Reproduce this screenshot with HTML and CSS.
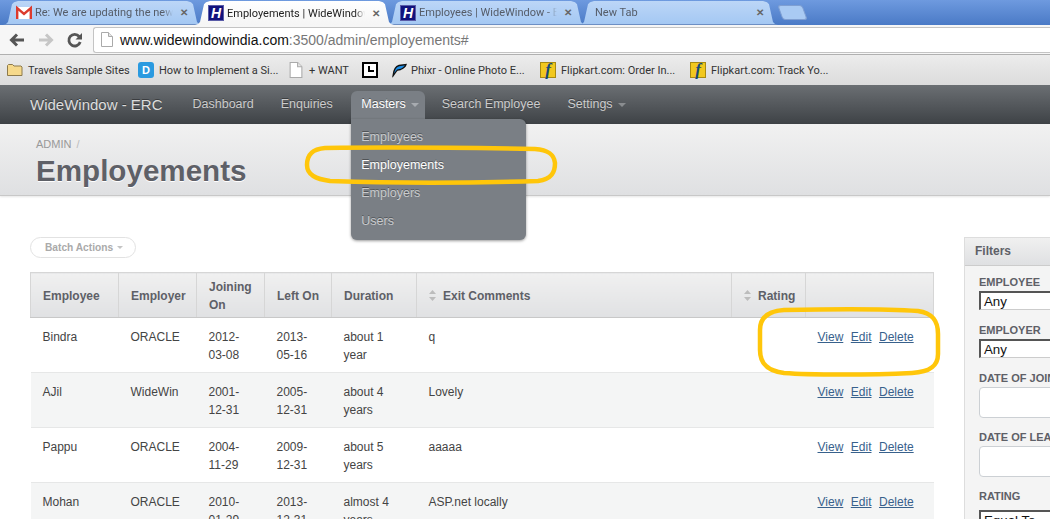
FILE: index.html
```html
<!DOCTYPE html>
<html lang="en">
<head>
  <meta charset="UTF-8" />
  <title>Employements | WideWindow - ERC</title>
  <link rel="stylesheet" href="styles.css">
</head>
<body>
  <div class="chrome">
    <div class="tabstrip">
      <div class="tab">
        <svg class="favicon" viewBox="0 0 16 16"><rect y="2" width="16" height="12" fill="#fff"/><path d="M1.200 14V3L8 8.800 14.800 3v11" fill="none" stroke="#dc3b2e" stroke-width="2.400"/></svg>
        <span class="tab-title">Re: We are updating the new</span>
        <span class="tab-close">✕</span>
      </div>
      <div class="tab tab-active">
        <span class="logo-h">H</span>
        <span class="tab-title">Employements | WideWindow</span>
        <span class="tab-close">✕</span>
      </div>
      <div class="tab">
        <span class="logo-h">H</span>
        <span class="tab-title">Employees | WideWindow - E</span>
        <span class="tab-close">✕</span>
      </div>
      <div class="tab tab-new">
        <span class="tab-title">New Tab</span>
        <span class="tab-close">✕</span>
      </div>
      <div class="newtab-btn"></div>
    </div>

    <div class="toolbar">
      <svg class="nav-icon" viewBox="0 0 18 18"><path d="M16 9H4M9 3.500 3.500 9 9 14.500" fill="none" stroke="#555" stroke-width="3"/></svg>
      <svg class="nav-icon" viewBox="0 0 18 18"><path d="M2 9h12M9 3.500 14.500 9 9 14.500" fill="none" stroke="#c6c6c6" stroke-width="3"/></svg>
      <svg class="nav-icon" viewBox="0 0 18 18"><path d="M14.200 11a5.800 5.800 0 1 1-1-5.500" fill="none" stroke="#555" stroke-width="2.800"/><path d="M16 2v6.500H9.500z" fill="#555"/></svg>
      <div class="omnibox">
        <svg class="page-icon" viewBox="0 0 12 15"><path d="M.5.500h7l4 4v10H.5z" fill="#fff" stroke="#aaa"/><path d="M7.500.500v4h4" fill="#e6e6e6" stroke="#aaa"/></svg>
        <span class="url-host">www.widewindowindia.com</span><span class="url-rest">:3500/admin/employements#</span>
      </div>
    </div>

    <div class="bookmarks">
      <div class="bookmark bm-travels">
        <svg class="bm-icon" viewBox="0 0 16 16"><path d="M.5 13.500V3.500l1-1h4l1.500 1.500h7l1 1v8.500z" fill="#f6d98b" stroke="#8d7a4c"/></svg>
        Travels Sample Sites
      </div>
      <div class="bookmark bm-how"><span class="bm-d">D</span>How to Implement a Si...</div>
      <div class="bookmark bm-want">
        <svg class="bm-icon" viewBox="0 0 12 15"><path d="M.5.500h7l4 4v10H.5z" fill="#fff" stroke="#aaa"/><path d="M7.500.500v4h4" fill="#e6e6e6" stroke="#aaa"/></svg>
        + WANT
      </div>
      <div class="bookmark bm-clock">
        <svg class="bm-icon" viewBox="0 0 16 16"><rect x="1" y="1" width="14" height="14" fill="#fff" stroke="#000" stroke-width="2"/><path d="M7 4v5h5" fill="none" stroke="#000" stroke-width="2"/></svg>
      </div>
      <div class="bookmark bm-phixr">
        <svg class="bm-icon" viewBox="0 0 16 16"><path d="M2 14C2.500 9 4 4.500 8 3.500L15 2.500C14 5.500 12 6.500 9.500 7.500L6.500 8C4.500 9.500 3.500 12.500 2 14z" fill="#1c8ee8" stroke="#111" stroke-width="1.300"/></svg>
        Phixr - Online Photo E...
      </div>
      <div class="bookmark bm-flip"><span class="bm-f">f</span>Flipkart.com: Order In...</div>
      <div class="bookmark bm-flip"><span class="bm-f">f</span>Flipkart.com: Track Yo...</div>
    </div>
  </div>

  <nav class="navbar">
    <span class="brand">WideWindow - ERC</span>
    <ul class="nav-list">
      <li class="nav-item">Dashboard</li>
      <li class="nav-item">Enquiries</li>
      <li class="nav-item nav-open">
        Masters<span class="caret"></span>
        <ul class="dropdown">
          <li>Employees</li>
          <li class="dropdown-current">Employements</li>
          <li>Employers</li>
          <li>Users</li>
        </ul>
      </li>
      <li class="nav-item">Search Employee</li>
      <li class="nav-item">Settings<span class="caret caret-dim"></span></li>
    </ul>
  </nav>

  <header class="title-bar">
    <div class="crumbs">ADMIN <span class="crumb-sep">/</span></div>
    <h2 class="page-title">Employements</h2>
  </header>

  <div class="content">
    <section class="main-col">
      <button class="batch-btn">Batch Actions<span class="caret caret-light"></span></button>
      <table class="grid">
        <thead>
          <tr>
            <th class="c-employee">Employee</th>
            <th class="c-employer">Employer</th>
            <th class="c-joining">Joining On</th>
            <th class="c-left">Left On</th>
            <th class="c-duration">Duration</th>
            <th class="c-comments"><svg class="sort" viewBox="0 0 7 11"><path d="M3.500 0 7 4H0zM3.500 11 0 7h7z"/></svg>Exit Comments</th>
            <th class="c-rating"><svg class="sort" viewBox="0 0 7 11"><path d="M3.500 0 7 4H0zM3.500 11 0 7h7z"/></svg>Rating</th>
            <th class="c-actions"></th>
          </tr>
        </thead>
        <tbody>
          <tr>
            <td>Bindra</td><td>ORACLE</td><td>2012-03-08</td><td>2013-05-16</td><td>about 1 year</td><td>q</td><td></td>
            <td><a class="row-link" href="#">View</a><a class="row-link" href="#">Edit</a><a class="row-link" href="#">Delete</a></td>
          </tr>
          <tr>
            <td>AJil</td><td>WideWin</td><td>2001-12-31</td><td>2005-12-31</td><td>about 4 years</td><td>Lovely</td><td></td>
            <td><a class="row-link" href="#">View</a><a class="row-link" href="#">Edit</a><a class="row-link" href="#">Delete</a></td>
          </tr>
          <tr>
            <td>Pappu</td><td>ORACLE</td><td>2004-11-29</td><td>2009-12-31</td><td>about 5 years</td><td>aaaaa</td><td></td>
            <td><a class="row-link" href="#">View</a><a class="row-link" href="#">Edit</a><a class="row-link" href="#">Delete</a></td>
          </tr>
          <tr>
            <td>Mohan</td><td>ORACLE</td><td>2010-01-29</td><td>2013-12-31</td><td>almost 4 years</td><td>ASP.net locally</td><td></td>
            <td><a class="row-link" href="#">View</a><a class="row-link" href="#">Edit</a><a class="row-link" href="#">Delete</a></td>
          </tr>
        </tbody>
      </table>
    </section>

    <aside class="filters">
      <h3 class="filters-head">Filters</h3>
      <div class="filters-body">
        <label class="f-label">Employee</label>
        <div class="f-select">Any</div>
        <label class="f-label">Employer</label>
        <div class="f-select">Any</div>
        <label class="f-label">Date of joining</label>
        <div class="f-input"></div>
        <label class="f-label">Date of leaving</label>
        <div class="f-input"></div>
        <label class="f-label">Rating</label>
        <div class="f-select f-select-rating">Equal To</div>
      </div>
    </aside>
  </div>

  <!-- yellow marks drawn over the screenshot -->
  <svg class="marks" viewBox="0 0 1050 519">
    <path d="M325 148C390 147 480 148 535 149 548 150 554 154 555 163 555 172 552 179 538 181 470 183 390 183 330 181 316 179 307 175 307 165 307 154 313 149 325 148z"/>
    <path d="M784 310C830 309 890 309 918 311 932 313 938 320 938 334V354C938 366 930 372 912 373 870 375 810 375 784 373 768 371 760 364 760 350V330C760 318 768 311 784 310z"/>
  </svg>
</body>
</html>
```
FILE: styles.css
```css
html, body {
  margin: 0;
  height: 519px;
  overflow: hidden;
}
body {
  position: relative;
  font-family: "Liberation Sans", Arial, sans-serif;
  font-size: 12px;
  color: #444;
  background: #fff;
}
ul { list-style: none; margin: 0; padding: 0; }

/* browser window */
.chrome { font-family: Roboto, "Liberation Sans", sans-serif; }
.tabstrip {
  height: 25px;
  display: flex;
  overflow: hidden;
  background: linear-gradient(#6e9adf, #4a7ac6);
  box-sizing: border-box;
  align-items: flex-end;
}
.tab {
  flex: none;
  height: 24px;
  width: 199px;
  margin-right: -7px;
  padding: 0 14px 0 13px;
  box-sizing: border-box;
  display: flex;
  align-items: center;
  gap: 3px;
  font-size: 11px;
  color: #555c68;
  background: linear-gradient(#bcd6f7, #a4c8f3);
  border-bottom: 1px solid #6d8fc4;
  clip-path: polygon(0 100%, 3px 96%, 5px 88%, 9px 14%, 11px 5%, 15px 0, calc(100% - 15px) 0, calc(100% - 11px) 5%, calc(100% - 9px) 14%, calc(100% - 5px) 88%, calc(100% - 3px) 96%, 100% 100%);
}
.tab:first-child { margin-left: 3px; }
.tab-active {
  z-index: 2;
  color: #222;
  background: linear-gradient(#fff, #f5f5f5);
  border-bottom: 0;
}
.tab-title {
  flex: 1;
  min-width: 0;
  overflow: hidden;
  white-space: nowrap;
  -webkit-mask-image: linear-gradient(to left, transparent, #000 10px);
}
.tab-new { padding-left: 16px; }
.tab-close { font-size: 10px; color: #666; font-weight: 700; margin-left: 4px; }
.favicon { width: 16px; height: 16px; flex: none; }
.logo-h {
  flex: none;
  width: 16px;
  height: 16px;
  background: #11127c;
  box-shadow: inset 0 0 0 1px #5a5ca8;
  color: #fff;
  font: italic 700 14px/16px "Liberation Sans", sans-serif;
  text-align: center;
}
.newtab-btn {
  flex: none;
  width: 25px;
  height: 15px;
  margin: 0 0 5px 9px;
  border-radius: 3px;
  background: #a9caf3;
  transform: skewX(20deg);
  border: 1px solid #7f9fd2;
  box-sizing: border-box;
}

.toolbar {
  height: 30px;
  display: flex;
  align-items: center;
  padding-left: 8px;
  gap: 8px;
  background: #f6f6f6;
  border-bottom: 1px solid #b0b0b0;
  box-sizing: border-box;
}
.nav-icon { width: 18px; height: 18px; flex: none; margin-right: 3px; }
.omnibox {
  flex: 1;
  height: 24px;
  display: flex;
  align-items: center;
  margin-left: -2px;
  padding-left: 7px;
  background: #fff;
  border: 1px solid #c4c4c4;
  border-right: 0;
  border-radius: 3px 0 0 3px;
  font: 14px "Liberation Sans", sans-serif;
}
.page-icon { width: 12px; height: 15px; margin-right: 7px; }
.url-host { color: #111; }
.url-rest { color: #777; }

.bookmarks {
  height: 30px;
  display: flex;
  align-items: center;
  background: linear-gradient(#ececec, #dcdcdc);
  font-size: 11px;
  color: #333;
  padding-left: 7px;
}
.bookmark { display: flex; align-items: center; gap: 5px; white-space: nowrap; }
.bm-icon { width: 16px; height: 16px; flex: none; }
.bm-travels { width: 131px; }
.bm-how { width: 150px; }
.bm-want { width: 74px; }
.bm-clock { width: 29px; }
.bm-phixr { width: 149px; gap: 4px; }
.bm-flip { width: 150px; }
.bm-d {
  width: 16px;
  height: 16px;
  border-radius: 3px;
  background: #2a9ae0;
  color: #fff;
  font: 700 11px/16px "Liberation Sans", sans-serif;
  text-align: center;
}
.bm-f {
  width: 16px;
  height: 16px;
  background: #f2c81e;
  border: 1px solid #a88a12;
  box-sizing: border-box;
  color: #174a78;
  font: italic 700 17px/14px "Liberation Serif", serif;
  text-align: center;
}

/* site nav */
.navbar {
  height: 39px;
  display: flex;
  align-items: center;
  padding-left: 30px;
  background: linear-gradient(#6b6f73, #3e4246);
  color: #ccc;
  box-sizing: border-box;
  text-shadow: 0 -1px 0 rgba(0, 0, 0, 0.35);
}
.brand { font-size: 15px; width: 149px; color: #ddd; flex: none; white-space: nowrap; }
.nav-list { display: flex; height: 100%; }
.nav-item {
  position: relative;
  margin: 6px 0 0;
  padding: 0 13.500px;
  font-size: 12.500px;
  line-height: 27px;
  white-space: nowrap;
}
.nav-open {
  width: 74px;
  box-sizing: border-box;
  padding: 0 10px;
  background: #7a7f85;
  border-radius: 6px 6px 0 0;
  color: #fff;
  height: 28px;
  margin: 6px 3px 0 5px;
}
.caret {
  display: inline-block;
  margin-left: 5px;
  vertical-align: middle;
  border: 4px solid transparent;
  border-top-color: #a7abb0;
  border-bottom: 0;
}
.caret-dim { border-top-color: #8a8d90; }
.caret-light {
  border-width: 3px 3px 0;
  margin-left: 4px;
  border-top-color: #c4c4c4;
}
.dropdown {
  position: absolute;
  left: 0;
  top: 28px;
  width: 175px;
  height: 121px;
  padding-top: 4px;
  box-sizing: border-box;
  background: #7a7f85;
  border-radius: 0 6px 6px 6px;
  box-shadow: 0 1px 3px rgba(0, 0, 0, 0.4);
  z-index: 5;
  color: #c9cbcd;
}
.dropdown li { height: 28px; line-height: 28px; padding-left: 10px; }
.dropdown-current { color: #fff; }

/* page title */
.title-bar {
  height: 72px;
  padding: 14px 36px 0;
  box-sizing: border-box;
  background: linear-gradient(#f1f1f1, #dfe0e2);
  border-bottom: 1px solid #c8c8c8;
  box-shadow: 0 1px 2px rgba(0, 0, 0, 0.1);
}
.crumbs { font-size: 11px; line-height: 13px; color: #999; }
.crumb-sep { margin-left: 2px; color: #bbb; }
.page-title {
  margin: 2px 0 0;
  font-size: 29.600px;
  line-height: 36px;
  font-weight: 700;
  color: #5e6067;
  text-shadow: 0 1px 0 #fff;
}

/* content */
.content {
  display: flex;
  gap: 30px;
  padding: 41px 0 0 30px;
}
.main-col { width: 904px; flex: none; }
.batch-btn {
  display: block;
  width: 106px;
  height: 21px;
  padding: 0 0 1px 14px;
  text-align: left;
  background: #fff;
  border: 1px solid #e2e2e2;
  border-radius: 11px;
  font: 700 10.200px "Liberation Sans", sans-serif;
  color: #aaa;
}
.grid {
  margin-top: 14px;
  width: 904px;
  table-layout: fixed;
  border-collapse: collapse;
  line-height: 18px;
}
.grid th {
  height: 45px;
  padding: 2px 12px 0;
  box-sizing: border-box;
  text-align: left;
  font-weight: 700;
  color: #5e6067;
  background: linear-gradient(#f0f0f0, #e0e1e3);
  border: 1px solid #d6d6d6;
  border-bottom: 1px solid #c8c8c8;
}
.c-employee { width: 88px; }
.c-employer { width: 78px; }
.c-joining { width: 68px; }
.c-left { width: 67px; }
.c-duration { width: 85px; }
.c-rating { width: 74px; }
.grid th.c-rating { white-space: nowrap; }
.c-actions { width: 128px; }
.sort {
  width: 7px;
  height: 11px;
  margin-right: 7px;
  vertical-align: -1px;
  fill: #bcbcbc;
}
.grid td {
  padding: 10px 12px 8px;
  vertical-align: top;
  border-bottom: 1px solid #e6e7e7;
  height: 36px;
}
.grid tbody tr:nth-child(even) td { background: #f4f5f5; }
.row-link { color: #38618c; margin-right: 7.500px; }

/* filters */
.filters {
  width: 270px;
  flex: none;
  height: 300px;
  background: #f4f4f4;
  border: 1px solid #ddd;
  box-sizing: border-box;
}
.filters-head {
  margin: 0;
  height: 27px;
  padding-left: 10px;
  font-size: 12px;
  line-height: 27px;
  color: #5e6067;
  background: linear-gradient(#f0f0f0, #dfe0e2);
  border-bottom: 1px solid #ccc;
}
.filters-body { padding: 10px 14px; }
.f-label {
  display: block;
  font-size: 11px;
  line-height: 13px;
  font-weight: 700;
  text-transform: uppercase;
  color: #5e6067;
}
.f-select {
  height: 19px;
  margin: 2px 0 14px;
  padding-left: 3px;
  box-sizing: border-box;
  background: #fff;
  border: 1px solid #ccc;
  border-top: 2px solid #555;
  border-left: 2px solid #555;
  font-size: 13.300px;
  line-height: 17px;
  color: #111;
}
.f-select-rating { margin-top: 7px; }
.f-input {
  height: 31px;
  margin: 2px 0 13px;
  background: #fff;
  border: 1px solid #ccd0d4;
  border-radius: 4px;
  box-sizing: border-box;
}

.marks {
  position: absolute;
  left: 0;
  top: 0;
  width: 1050px;
  height: 519px;
  z-index: 10;
  fill: none;
  stroke: #ffc60a;
  stroke-width: 4.500;
}
```
